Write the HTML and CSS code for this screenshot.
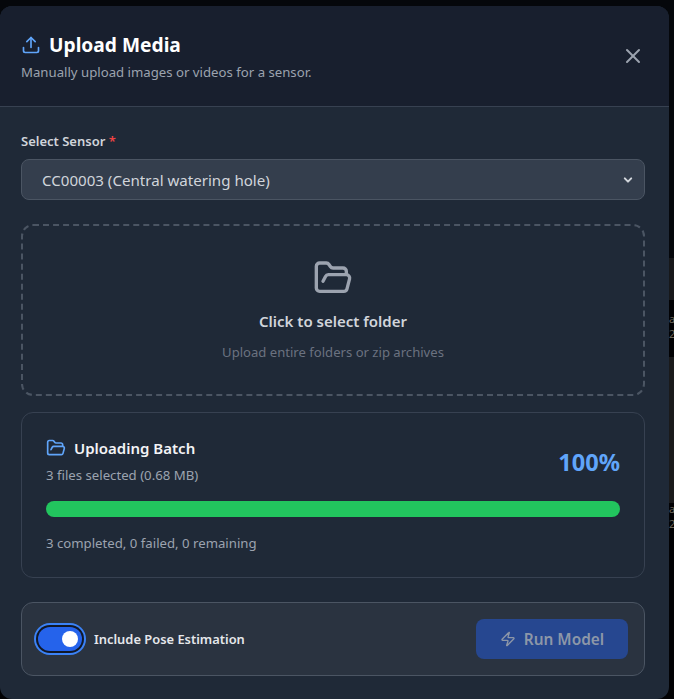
FILE: index.html
```html
<!DOCTYPE html>
<html lang="en">
<head>
<meta charset="utf-8">
<title>Upload Media</title>
<link rel="stylesheet" href="styles.css">
</head>
<body>
<div class="backdrop">
  <div class="bg-panel"></div>
  <div class="bg-thumb bg-thumb-a"></div>
  <div class="bg-thumb bg-thumb-b"></div>
  <div class="bg-text bg-text-a">a<br>2</div>
  <div class="bg-text bg-text-b">a<br>2</div>
</div>
<div class="modal">
  <header class="head">
    <div class="head-text">
      <h1 class="title">
        <svg class="ico-upload" viewBox="0 0 24 24"><path d="M21 15v4a2 2 0 0 1-2 2H5a2 2 0 0 1-2-2v-4"/><path d="M17 8l-5-5-5 5"/><path d="M12 3v12"/></svg>
        Upload Media
      </h1>
      <p class="sub">Manually upload images or videos for a sensor.</p>
    </div>
    <svg class="ico-close" viewBox="0 0 24 24"><path d="M18 6 6 18"/><path d="m6 6 12 12"/></svg>
  </header>
  <main class="body">
    <div class="label">Select Sensor <span class="req">*</span></div>
    <div class="select">
      <span>CC00003 (Central watering hole)</span>
      <svg class="chev" viewBox="0 0 20 20"><path d="M6 8l4 4 4-4"/></svg>
    </div>
    <div class="drop">
      <svg class="ico-folder" viewBox="0 0 24 24"><path d="m6 14 1.5-2.9A2 2 0 0 1 9.24 10H20a2 2 0 0 1 1.94 2.5l-1.54 6a2 2 0 0 1-1.95 1.5H4a2 2 0 0 1-2-2V5a2 2 0 0 1 2-2h3.9a2 2 0 0 1 1.69.9l.81 1.2a2 2 0 0 0 1.67.9H18a2 2 0 0 1 2 2v2"/></svg>
      <div class="drop-title">Click to select folder</div>
      <div class="drop-sub">Upload entire folders or zip archives</div>
    </div>
    <section class="batch">
      <div class="batch-top">
        <div>
          <div class="batch-title">
            <svg class="ico-batch" viewBox="0 0 24 24"><path d="m6 14 1.5-2.9A2 2 0 0 1 9.24 10H20a2 2 0 0 1 1.94 2.5l-1.54 6a2 2 0 0 1-1.95 1.5H4a2 2 0 0 1-2-2V5a2 2 0 0 1 2-2h3.9a2 2 0 0 1 1.69.9l.81 1.2a2 2 0 0 0 1.67.9H18a2 2 0 0 1 2 2v2"/></svg>
            Uploading Batch
          </div>
          <div class="meta">3 files selected (0.68 MB)</div>
        </div>
        <div class="pct">100%</div>
      </div>
      <div class="bar"></div>
      <div class="meta">3 completed, 0 failed, 0 remaining</div>
    </section>
    <section class="actions">
      <div class="toggle-wrap">
        <div class="toggle"><span class="knob"></span></div>
        <span class="toggle-label">Include Pose Estimation</span>
      </div>
      <div class="run">
        <svg class="ico-zap" viewBox="0 0 24 24"><path d="M4 14a1 1 0 0 1-.78-1.63l9.9-10.2a.5.5 0 0 1 .86.46l-1.92 6.02A1 1 0 0 0 13 10h7a1 1 0 0 1 .78 1.63l-9.9 10.2a.5.5 0 0 1-.86-.46l1.92-6.02A1 1 0 0 0 11 14z"/></svg>
        Run Model
      </div>
    </section>
  </main>
</div>
</body>
</html>
```
FILE: styles.css
```css
* { box-sizing: border-box; }
html, body { margin: 0; height: 100%; }
body {
  background: #020204;
  font-family: "Noto Sans", "Open Sans", sans-serif;
  overflow: hidden;
  padding: 6px 5px 0 0;
  position: relative;
}
svg { fill: none; stroke: currentColor; stroke-width: 2; stroke-linecap: round; stroke-linejoin: round; flex: none; }
.backdrop { position: absolute; inset: 0; overflow: hidden; }
.bg-panel { position: absolute; left: 0; right: 0; top: 0; height: 258px; background: #05070b; }
.bg-thumb { position: absolute; left: 660px; right: 0; }
.bg-thumb-a { top: 258px; height: 42px; background: #17181a; }
.bg-thumb-b { top: 357px; height: 146px; background: #1a1a1b; }
.bg-text { position: absolute; left: 669px; font-size: 11px; line-height: 15px; color: #6b6459; }
.bg-text-a { top: 311px; }
.bg-text-b { top: 501px; }
.modal {
  position: relative;
  height: 693px;
  background: #1f2937;
  border-radius: 12px;
  overflow: hidden;
}
.head {
  height: 101px;
  background: #181f2e;
  border-bottom: 1px solid #374151;
  padding: 25px 24px 0 21px;
  display: flex;
  justify-content: space-between;
}
.title {
  margin: 0;
  display: flex;
  align-items: center;
  gap: 8px;
  font-size: 19.2px;
  line-height: 28px;
  font-weight: 700;
  color: #fff;
}
.ico-upload { width: 20px; height: 20px; color: #60a5fa; }
.sub { margin: 5px 0 0; font-size: 13.2px; line-height: 16px; color: #9ca3af; }
.ico-close { width: 24px; height: 24px; color: #9ca3af; margin-top: 13px; }
.body { padding: 25px 24px 0 21px; }
.label { font-size: 13px; line-height: 18px; font-weight: 600; color: #d1d5db; }
.req { color: #ef4444; }
.select {
  margin-top: 9px;
  height: 41px;
  border: 1px solid #4b5563;
  border-radius: 8px;
  background: #343e4d;
  padding: 0 8px 0 20px;
  display: flex;
  align-items: center;
  justify-content: space-between;
  font-size: 15.1px;
  color: #d1d5db;
}
.chev { width: 16px; height: 16px; color: #d1d5db; stroke-width: 2.5; }
.drop {
  margin-top: 24px;
  height: 172px;
  border: 2px dashed #4b5563;
  border-radius: 12px;
  display: flex;
  flex-direction: column;
  align-items: center;
  padding-top: 32px;
}
.ico-folder { width: 40px; height: 40px; color: #9ca3af; }
.drop-title { margin-top: 13px; font-size: 15px; line-height: 20px; font-weight: 600; color: #d1d5db; }
.drop-sub { margin-top: 12px; font-size: 13.1px; line-height: 18px; color: #6b7280; }
.batch {
  margin-top: 16px;
  height: 166px;
  border: 1px solid #374151;
  border-radius: 12px;
  padding: 23px 24px 0;
}
.batch-top { display: flex; justify-content: space-between; align-items: center; }
.batch-title {
  display: flex;
  align-items: center;
  gap: 8px;
  font-size: 15px;
  line-height: 24px;
  font-weight: 600;
  color: #f3f4f6;
}
.ico-batch { width: 20px; height: 20px; color: #60a5fa; }
.meta { font-size: 13.2px; line-height: 18px; color: #9ca3af; }
.batch-top .meta { margin-top: 6px; }
.pct { margin-top: 3px; font-size: 23.6px; line-height: 32px; font-weight: 700; color: #60a5fa; }
.bar { margin-top: 17px; height: 16px; border-radius: 8px; background: #22c55e; }
.bar + .meta { margin-top: 17px; }
.actions {
  margin-top: 24px;
  height: 74px;
  background: #2a3340;
  border: 1px solid #4b5563;
  border-radius: 12px;
  padding: 0 16px 0 14px;
  display: flex;
  align-items: center;
  justify-content: space-between;
}
.toggle-wrap { display: flex; align-items: center; gap: 10px; }
.toggle {
  width: 44px;
  height: 24px;
  margin: 2px;
  border-radius: 12px;
  background: #2563eb;
  box-shadow: 0 0 0 2px #111827, 0 0 0 4px #3b82f6;
  position: relative;
}
.knob { position: absolute; top: 4px; left: 24px; width: 16px; height: 16px; border-radius: 50%; background: #fff; }
.toggle-label { font-size: 12.9px; font-weight: 600; color: #e5e7eb; }
.run {
  width: 152px;
  height: 40px;
  border-radius: 8px;
  background: #264790;
  display: flex;
  align-items: center;
  justify-content: center;
  gap: 8px;
  font-size: 15.4px;
  font-weight: 600;
  color: #8d97a8;
}
.ico-zap { width: 16px; height: 16px; }
```
